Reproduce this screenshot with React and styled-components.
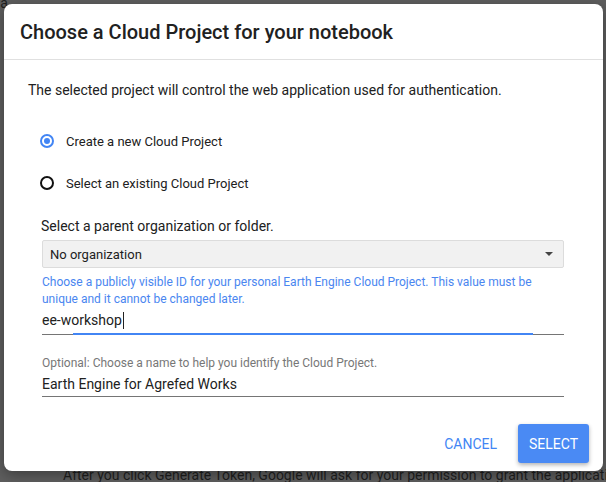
import React from "react";
import styled, { createGlobalStyle } from "styled-components";

const Global = createGlobalStyle`
  html, body { margin: 0; padding: 0; }
  body {
    width: 606px; height: 482px; overflow: hidden;
    background: #5e5e5e;
    font-family: Roboto, "Liberation Sans", sans-serif;
  }
`;

const Page = styled.div`
  position: relative;
  width: 606px;
  height: 482px;
  overflow: hidden;
`;

const BackText = styled.div`
  position: absolute;
  left: ${p => p.$x}px;
  top: ${p => p.$y}px;
  font-size: 14px;
  line-height: 17px;
  color: #1e1e1e;
  white-space: nowrap;
`;

const Dialog = styled.div`
  position: absolute;
  left: 4px;
  top: 4px;
  width: 599px;
  height: 467px;
  background: #fff;
  border-radius: 8px;
  box-shadow: 0 4px 14px rgba(0,0,0,0.35);
  display: flex;
  flex-direction: column;
  overflow: hidden;
`;

const Header = styled.div`
  height: 56px;
  border-bottom: 1px solid #e0e0e0;
  display: flex;
  align-items: center;
  padding-left: 16px;
  box-sizing: border-box;
  font-size: 20px;
  font-weight: 500;
  color: #212121;
`;

const Body = styled.div`
  flex: 1;
  padding: 20px 39px 0 24px;
  display: flex;
  flex-direction: column;
`;

const Intro = styled.p`
  margin: 0;
  font-size: 14px;
  line-height: 20px;
  color: #212121;
`;

const RadioGroup = styled.div`
  margin-top: 31px;
  margin-left: 12px;
  display: flex;
  flex-direction: column;
  gap: 22px;
`;

const RadioRow = styled.label`
  display: flex;
  align-items: center;
  gap: 12px;
  font-size: 13px;
  color: #212121;
  height: 20px;
`;

const RadioCircle = styled.span`
  width: 14px;
  height: 14px;
  box-sizing: border-box;
  border-radius: 50%;
  border: 2px solid ${p => (p.$on ? "#4285f4" : "#111")};
  display: flex;
  align-items: center;
  justify-content: center;
  &::after {
    content: "";
    width: 6px;
    height: 6px;
    border-radius: 50%;
    background: ${p => (p.$on ? "#4285f4" : "transparent")};
  }
`;

const Fields = styled.div`
  margin-left: 14px;
  display: flex;
  flex-direction: column;
`;

const SectionLabel = styled.div`
  margin-top: 23px;
  margin-left: -1px;
  font-size: 14px;
  line-height: 20px;
  color: #212121;
`;

const SelectBox = styled.div`
  margin-top: 4px;
  height: 28px;
  box-sizing: border-box;
  background: #f1f1f1;
  border: 1px solid #dcdcdc;
  border-radius: 2px;
  display: flex;
  align-items: center;
  justify-content: space-between;
  padding: 0 10px 0 7px;
  font-size: 13px;
  color: #212121;
`;

const Caret = styled.span`
  width: 0;
  height: 0;
  border-left: 4px solid transparent;
  border-right: 4px solid transparent;
  border-top: 4px solid #444;
`;

const Hint = styled.div`
  margin-top: ${p => p.$gap}px;
  font-size: 12px;
  line-height: 17px;
  color: ${p => (p.$blue ? "#4a86f0" : "#777")};
`;

const InputLine = styled.div`
  position: relative;
  height: ${p => p.$h}px;
  padding-top: ${p => p.$pt}px;
  line-height: 20px;
  display: flex;
  align-items: flex-start;
  font-size: 14px;
  color: #212121;
  border-bottom: 1px solid #757575;
  box-sizing: border-box;
`;

const FocusBar = styled.span`
  position: absolute;
  left: 31px;
  right: 31px;
  bottom: -1px;
  height: 2px;
  background: #4285f4;
`;

const Cursor = styled.span`
  display: inline-block;
  width: 1px;
  height: 17px;
  margin-top: 2px;
  background: #222;
  margin-left: 1px;
`;

const Footer = styled.div`
  display: flex;
  justify-content: flex-end;
  align-items: center;
  gap: 21px;
  padding: 0 14px 8px 0;
`;

const TextButton = styled.button`
  border: none;
  background: none;
  padding: 0;
  font-family: inherit;
  font-size: 14px;
  color: #4285f4;
  text-transform: uppercase;
`;

const RaisedButton = styled.button`
  border: none;
  width: 71px;
  height: 39px;
  border-radius: 3px;
  background: #4a8af4;
  color: #fff;
  font-family: inherit;
  font-size: 14px;
  text-transform: uppercase;
  box-shadow: 0 2px 4px rgba(0,0,0,0.3);
`;

export default function App() {
  return (
    <Page>
      <Global />
      <BackText $x={-7} $y={-5}>ca</BackText>
      <BackText $x={-3} $y={453}>i</BackText>
      <BackText $x={63} $y={467}>
        After you click Generate Token, Google will ask for your permission to grant the application
      </BackText>
      <Dialog>
        <Header>Choose a Cloud Project for your notebook</Header>
        <Body>
          <Intro>The selected project will control the web application used for authentication.</Intro>
          <RadioGroup>
            <RadioRow>
              <RadioCircle $on />
              Create a new Cloud Project
            </RadioRow>
            <RadioRow>
              <RadioCircle />
              Select an existing Cloud Project
            </RadioRow>
          </RadioGroup>
          <Fields>
            <SectionLabel>Select a parent organization or folder.</SectionLabel>
            <SelectBox>
              No organization
              <Caret />
            </SelectBox>
            <Hint $blue $gap={6}>
              Choose a publicly visible ID for your personal Earth Engine Cloud Project. This value must be unique and it cannot be changed later.
            </Hint>
            <InputLine $h={27} $pt={2}>
              ee-workshop<Cursor />
              <FocusBar />
            </InputLine>
            <Hint $gap={20}>Optional: Choose a name to help you identify the Cloud Project.</Hint>
            <InputLine $h={25} $pt={2}>Earth Engine for Agrefed Works</InputLine>
          </Fields>
        </Body>
        <Footer>
          <TextButton>Cancel</TextButton>
          <RaisedButton>Select</RaisedButton>
        </Footer>
      </Dialog>
    </Page>
  );
}
